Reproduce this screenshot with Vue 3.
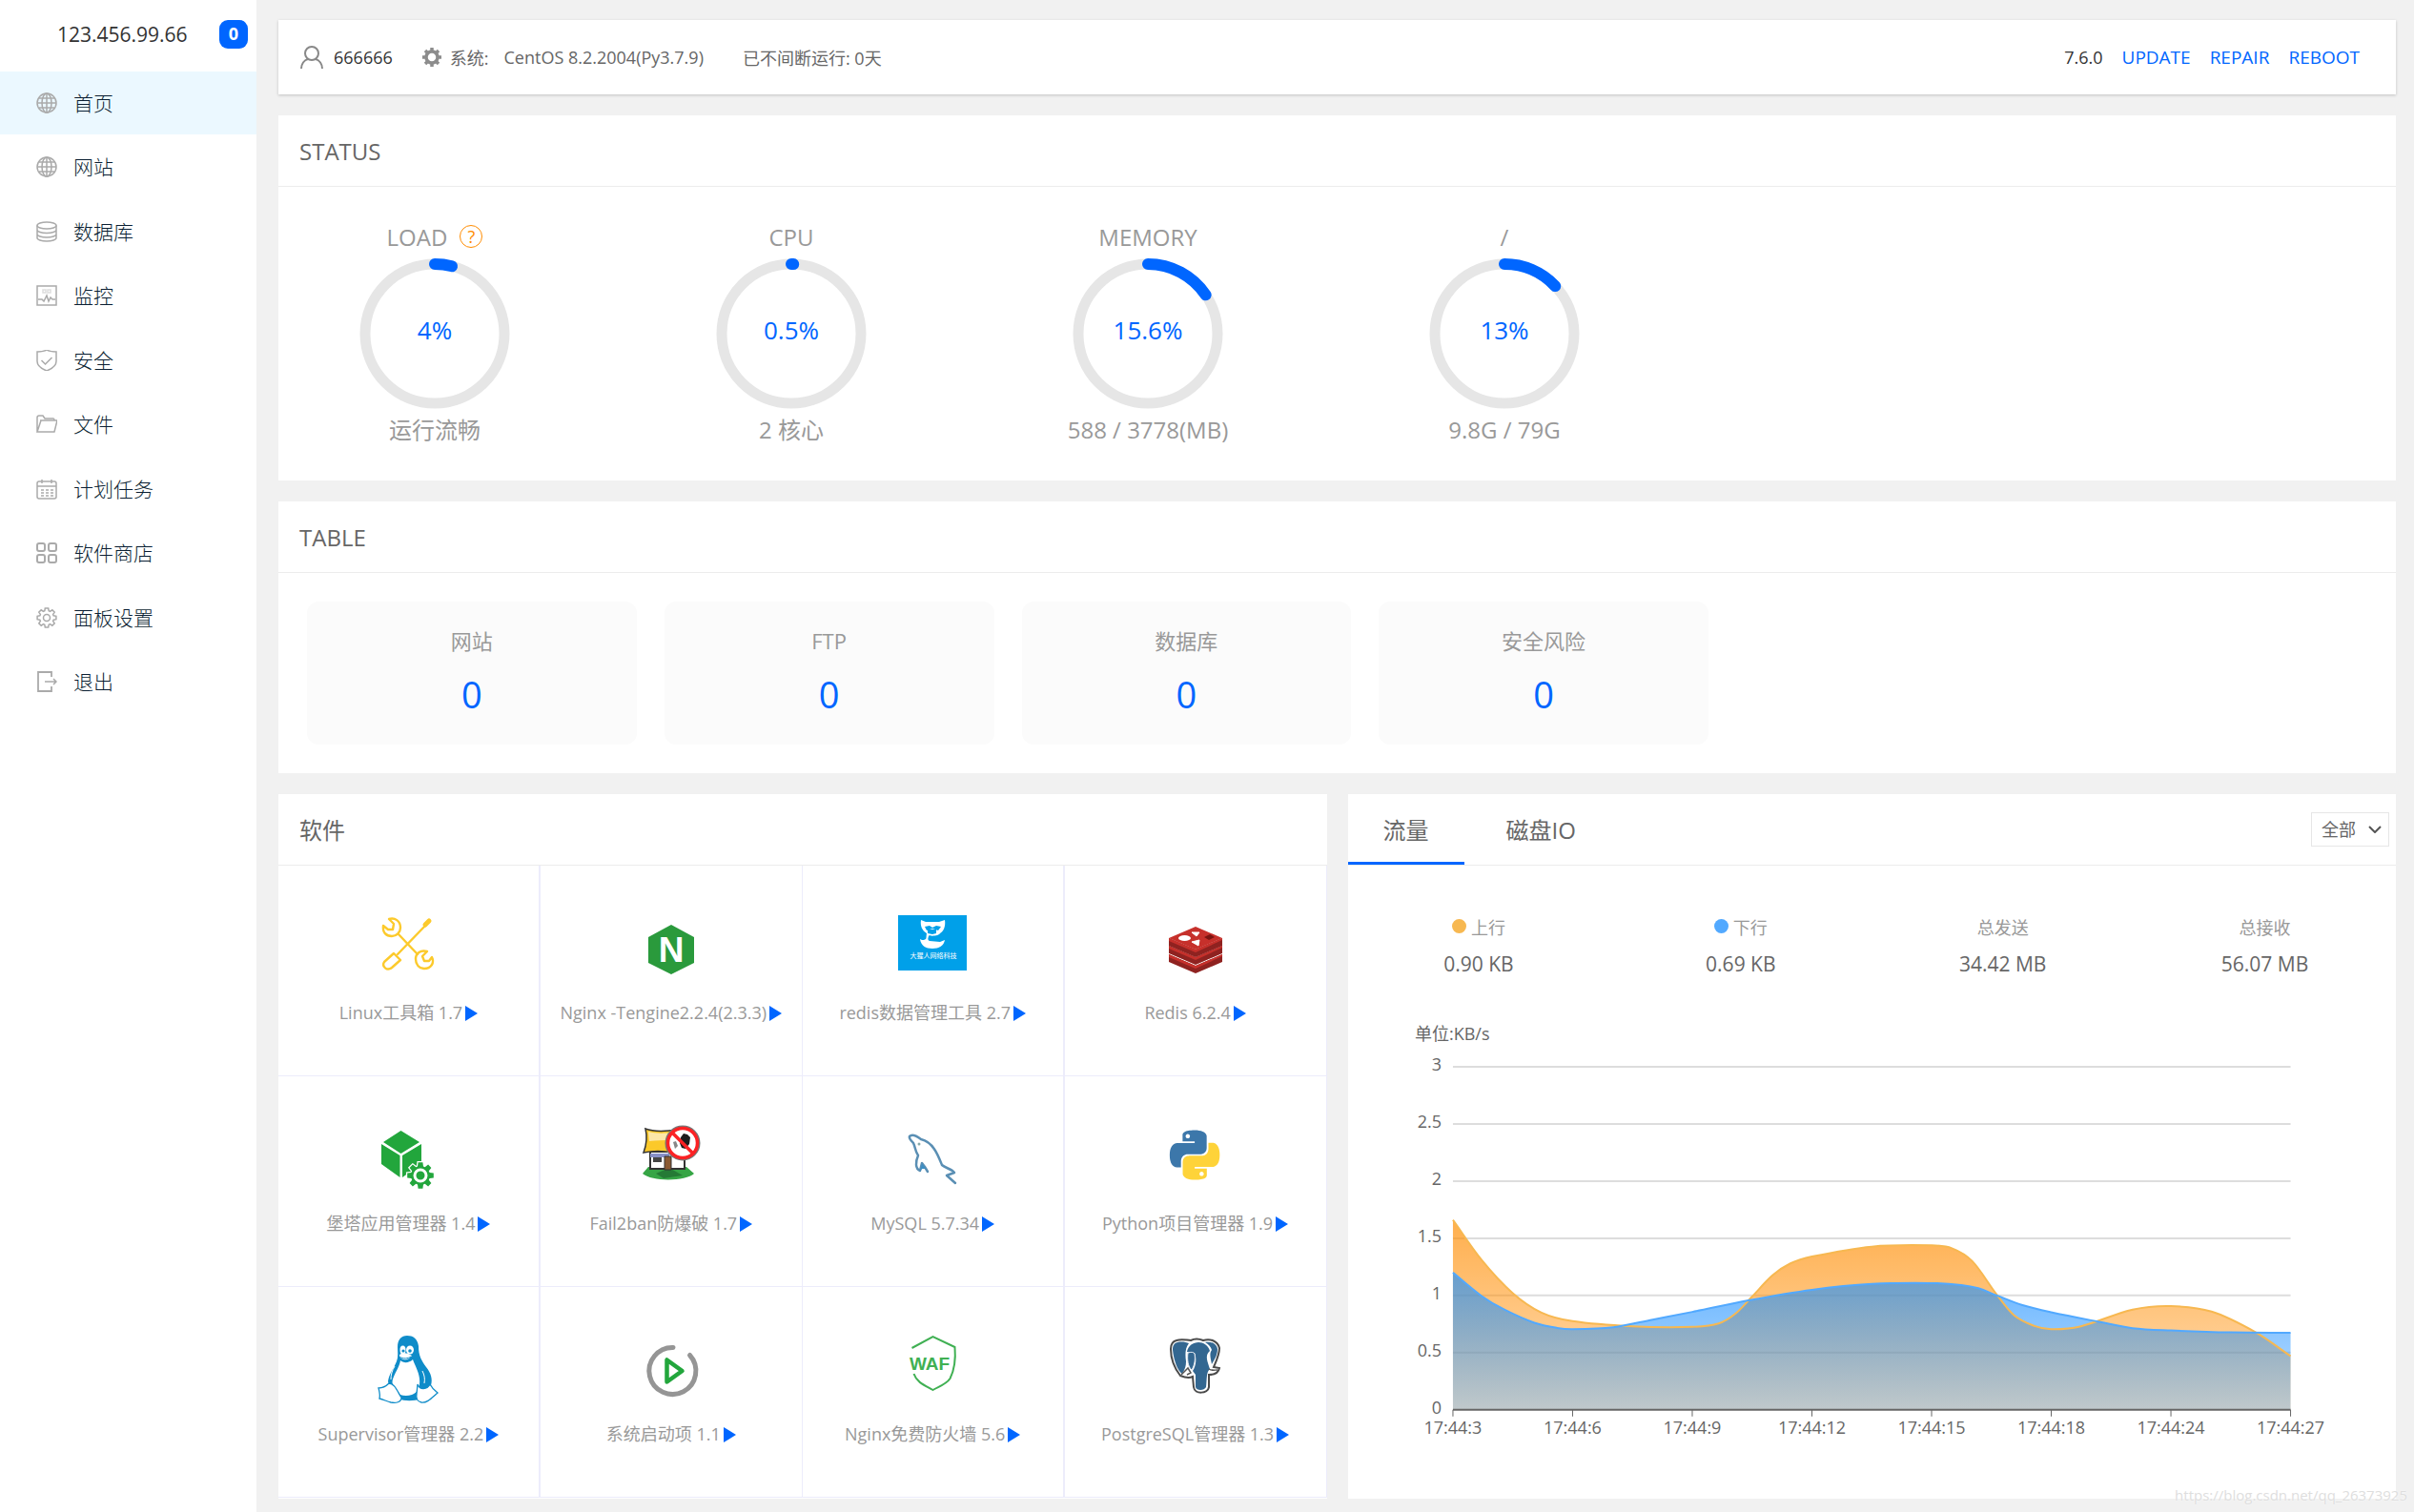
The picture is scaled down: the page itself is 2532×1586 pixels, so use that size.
<template>
  <div class="layout">
    <aside class="sidebar">
      <div class="server">
        <span class="ip">123.456.99.66</span>
        <span class="badge">0</span>
      </div>
      <nav>
        <ul class="menu">
          <li v-for="item in menus" :key="item.name">
            <a href="#" class="menu-link" :class="{ active: item.name === activeMenu }" @click.prevent="activeMenu = item.name">
              <svg class="menu-icon" viewBox="0 0 22 22" aria-hidden="true" v-html="item.icon"></svg>
              <span class="menu-name">{{ item.name }}</span>
            </a>
          </li>
        </ul>
      </nav>
    </aside>

    <main class="main">
      <header class="topbar">
        <svg class="user-icon" viewBox="0 0 24 24" aria-hidden="true">
          <circle cx="12" cy="8" r="7" />
          <path d="M1 24c0-5 3-9 7-10M23 24c0-5-3-9-7-10" />
        </svg>
        <span class="user">666666</span>
        <svg class="sys-icon" viewBox="0 0 22 22" aria-hidden="true">
          <circle cx="11" cy="11" r="6" />
          <path d="M11 1v5M11 16v5M1 11h5M16 11h5M4 4l3 3M15 15l3 3M18 4l-3 3M7 15l-3 3" />
        </svg>
        <span>系统:</span>
        <span class="os">CentOS 8.2.2004(Py3.7.9)</span>
        <span class="uptime">已不间断运行: 0天</span>
        <span class="version">7.6.0</span>
        <a href="#" class="action">UPDATE</a>
        <a href="#" class="action">REPAIR</a>
        <a href="#" class="action">REBOOT</a>
      </header>

      <section class="card">
        <h2 class="card-title">STATUS</h2>
        <div class="gauges">
          <div v-for="g in gauges" :key="g.label" class="gauge">
            <div class="gauge-label">
              {{ g.label }}
              <a v-if="g.help" href="#" class="help">?</a>
            </div>
            <svg class="ring" viewBox="0 0 160 160">
              <circle class="ring-track" cx="80" cy="80" r="73" />
              <circle
                class="ring-value"
                cx="80"
                cy="80"
                r="73"
                pathLength="100"
                :stroke-dasharray="`${g.value} 100`"
                transform="rotate(-90 80 80)"
              />
              <text x="80" y="86">{{ g.value }}%</text>
            </svg>
            <div class="gauge-desc">{{ g.desc }}</div>
          </div>
        </div>
      </section>

      <section class="card">
        <h2 class="card-title">TABLE</h2>
        <div class="counters">
          <div v-for="c in counters" :key="c.label" class="counter">
            <div class="counter-label">{{ c.label }}</div>
            <a href="#" class="counter-num">{{ c.num }}</a>
          </div>
        </div>
      </section>

      <div class="bottom">
        <section class="card">
          <h2 class="card-title">软件</h2>
          <div class="soft-list">
            <a v-for="s in softs" :key="s.name" href="#" class="soft">
              <svg class="soft-icon" viewBox="0 0 72 76" aria-hidden="true" v-html="s.icon"></svg>
              <span class="soft-name">{{ s.name }}<i class="play"></i></span>
            </a>
          </div>
        </section>

        <section class="card">
          <div class="tabs">
            <button
              v-for="t in tabs"
              :key="t"
              type="button"
              class="tab"
              :class="{ on: t === activeTab }"
              @click="activeTab = t"
            >{{ t }}</button>
            <label class="net-select">
              <select v-model="network" aria-label="网卡">
                <option value="all">全部</option>
              </select>
              <svg viewBox="0 0 14 8" aria-hidden="true"><path d="M1 1l6 6 6-6" /></svg>
            </label>
          </div>
          <div class="stats">
            <div v-for="s in stats" :key="s.label" class="stat">
              <div class="stat-label">
                <i v-if="s.color" class="dot" :style="{ background: s.color }"></i>{{ s.label }}
              </div>
              <div class="stat-value">{{ s.value }}</div>
            </div>
          </div>
          <svg class="chart" viewBox="0 0 1100 500">
            <defs>
              <linearGradient id="upFill" x1="0" y1="0" x2="0" y2="1">
                <stop offset="0" stop-color="#ff8c00" stop-opacity="0.7" />
                <stop offset="1" stop-color="#ff8c00" stop-opacity="0.28" />
              </linearGradient>
              <linearGradient id="downFill" x1="0" y1="0" x2="0" y2="1">
                <stop offset="0" stop-color="#1e90ff" stop-opacity="0.68" />
                <stop offset="1" stop-color="#1e90ff" stop-opacity="0.28" />
              </linearGradient>
            </defs>
            <text class="axis" x="70" y="32">单位:KB/s</text>
            <g v-for="n in yTicks" :key="n">
              <line v-if="n > 0" class="grid" :x1="left" :x2="right" :y1="py(n)" :y2="py(n)" />
              <text class="axis" :x="left - 12" :y="py(n) + 4" text-anchor="end">{{ n }}</text>
            </g>
            <path :d="area(up)" fill="url(#upFill)" />
            <path :d="area(down)" fill="url(#downFill)" />
            <path :d="curve(up)" class="line-up" />
            <path :d="curve(down)" class="line-down" />
            <line class="axis-line" :x1="left" :x2="right" :y1="py(0)" :y2="py(0)" />
            <g v-for="(t, i) in times" :key="t">
              <line class="tick" :x1="px(i)" :x2="px(i)" :y1="py(0)" :y2="py(0) + 7" />
              <text class="axis" :x="px(i)" :y="py(0) + 25" text-anchor="middle">{{ t }}</text>
            </g>
          </svg>
        </section>
      </div>
    </main>

    <div class="watermark">https://blog.csdn.net/qq_26373925</div>
  </div>
</template>

<script setup>
import { ref } from 'vue'

const activeMenu = ref('首页')
const activeTab = ref('流量')
const network = ref('all')

const globe = '<circle cx="11" cy="11" r="10"/><ellipse cx="11" cy="11" rx="5" ry="10"/><path d="M1 11h20M11 1v20M3 6h16M3 16h16"/>'

// 8 齿齿轮轮廓
const gear = (cx, cy, ro, ri) => {
  const pts = []
  for (let i = 0; i < 8; i++) {
    const a = (i * Math.PI) / 4
    ;[[-0.3, ri], [-0.17, ro], [0.17, ro], [0.3, ri]].forEach(([d, r]) => {
      pts.push(`${(cx + r * Math.sin(a + d)).toFixed(1)} ${(cy - r * Math.cos(a + d)).toFixed(1)}`)
    })
  }
  return 'M' + pts.join('L') + 'Z'
}

const menus = [
  { name: '首页', icon: globe },
  { name: '网站', icon: globe },
  {
    name: '数据库',
    icon: '<ellipse cx="11" cy="4.5" rx="10" ry="3.5"/><path d="M1 4.500v13c0 2 4.500 3.500 10 3.500s10-1.500 10-3.500v-13M1 9c0 2 4.500 3.500 10 3.500S21 11 21 9M1 13.500c0 2 4.500 3.500 10 3.500s10-1.500 10-3.500"/>'
  },
  {
    name: '监控',
    icon: '<path d="M1 1h20v20H1zM2 15h4l2 2 3-6 2 6 2-4 2 2h3"/><path d="M7 5h3v3H7zM12 5h3v3h-3z" opacity=".4"/>'
  },
  { name: '安全', icon: '<path d="M11 0c3 2 7 2 10 2v10c0 5-5 8-10 10C6 20 1 17 1 12V2c3 0 7 0 10-2zM5.500 11l4 4 7-7"/>' },
  { name: '文件', icon: '<path d="M1 19V4c0-1 1-2 2-2h4l2 3h9c1 0 1 1 1 2M1 19L5 7h17l-3 12H1zM4 7h15"/>' },
  {
    name: '计划任务',
    icon: '<rect x="1" y="3" width="20" height="18" rx="2"/><path d="M1 8h20M6 1v4M16 1v4"/><path d="M5 12h3M10 12h3M15 12h3M5 15h3M10 15h3M15 15h3M5 18h3M10 18h3M15 18h3"/>'
  },
  {
    name: '软件商店',
    icon: '<g stroke-width="2"><rect x="1" y="1" width="8" height="8" rx="2"/><rect x="13" y="1" width="8" height="8" rx="2"/><rect x="1" y="13" width="8" height="8" rx="2"/><rect x="13" y="13" width="8" height="8" rx="2"/></g>'
  },
  { name: '面板设置', icon: `<path d="${gear(11, 11, 10, 7.5)}"/><circle cx="11" cy="11" r="3.500"/>` },
  { name: '退出', icon: '<path d="M16 6V1H2v20h14v-5" stroke-width="1.800"/><path d="M9 11h12M18 8l3 3-3 3"/>' }
]

const gauges = [
  { label: 'LOAD', value: 4, desc: '运行流畅', help: true },
  { label: 'CPU', value: 0.5, desc: '2 核心' },
  { label: 'MEMORY', value: 15.6, desc: '588 / 3778(MB)' },
  { label: '/', value: 13, desc: '9.8G / 79G' }
]

const counters = [
  { label: '网站', num: 0 },
  { label: 'FTP', num: 0 },
  { label: '数据库', num: 0 },
  { label: '安全风险', num: 0 }
]

// redis 图标的一层
const redisLayer = (y) =>
  `<path d="M8 ${y}l28 12 28-12v8L36 ${y + 20} 8 ${y + 8}z" fill="#8f2220"/><path d="M8 ${y}l28 12 28-12v2L36 ${y + 15} 8 ${y + 3}z" fill="#c6302b"/>`

const softs = [
  {
    name: 'Linux工具箱 1.7',
    icon: `<g fill="none" stroke="#fcca2c" stroke-width="2.400" stroke-linejoin="round" stroke-linecap="round">
      <path d="M16 6c6-2 12 2 12 9 0 5-4 9-9 9-6 0-10-4-9-11l5 4 5 0 1-6z"/>
      <path d="M26 22l20 21"/>
      <path d="M61 46c3 6-1 12-8 12-6 0-9-5-9-10 0-6 5-10 12-8l-5 5 2 5 5 0z"/>
      <path d="M55 12L25 43"/><path d="M54 12l4-4" stroke-width="5"/>
      <path d="M21 42l7 7-9 8c-5 4-11-1-8-6z"/></g>`
  },
  {
    name: 'Nginx -Tengine2.2.4(2.3.3)',
    icon: `<path d="M36 12l24 13v27L36 64 12 52V25z" fill="#2a9a3c"/>
      <text x="36" y="51" text-anchor="middle" font-size="37" font-weight="700" fill="#fff" font-family="Liberation Sans, sans-serif">N</text>`
  },
  {
    name: 'redis数据管理工具 2.7',
    icon: `<path d="M0 2h72v58H0z" fill="#00a0e9"/>
      <path d="M24 7l5 2h14l6-2c1 6-1 12-5 14-1 3-14 4-14 0-5-3-7-8-6-14z" fill="#fff"/>
      <path d="M28 14l5-1 3 2 4-2 5 1-3 4-6-2-6 2z" fill="#00a0e9"/><path d="M31 17h9v4l-4 1-5-1z" fill="#00a0e9"/>
      <path d="M30 21c-1 5 1 7-5 7l-2-1c1 7 6 10 13 10s12-3 13-9l-5 2-11-1c-3-1-1-5 0-7z" fill="#fff"/>
      <text x="37" y="47" text-anchor="middle" font-size="7" fill="#fff">大猩人网络科技</text>`
  },
  {
    name: 'Redis 6.2.4',
    icon: `${redisLayer(43)}${redisLayer(34)}${redisLayer(26)}<path d="M36 14l28 12-28 12L8 26z" fill="#c6302b"/>
      <ellipse cx="24.500" cy="26" rx="6.500" ry="3" fill="#fff"/><path d="M32 20l8 0-3 4zM32 30l8-2-1 6z" fill="#fff" stroke="#fff"/>
      <path d="M45 25l6-3 5 3-6 3z" fill="#7a1411"/>`
  },
  {
    name: '堡塔应用管理器 1.4',
    icon: `<g fill="#22a63c"><path d="M28.500 7L48 19 28.500 31 10 19zM8 21l19.500 12v23L8 42zM50 21L30 33v23l20-14z"/>
      <path d="${gear(49, 54, 14, 10)}" stroke="#fff" stroke-width="2.500" paint-order="stroke"/></g>
      <circle cx="49" cy="54" r="6" fill="none" stroke="#fff" stroke-width="3"/>`
  },
  {
    name: 'Fail2ban防爆破 1.7',
    icon: `<path d="M6 52l6-7h40l8 7c-8 8-44 9-54 0z" fill="#36a545"/><path d="M20 52l14-6 14 8-20 3z" fill="#257a35"/>
      <path d="M14 29h36v18H14z" fill="#fff" stroke="#333" stroke-width="2"/><path d="M14 31h20v4H14z" fill="#8890c8"/>
      <path d="M17 35h9v5h-9z" fill="#444"/><path d="M29 34h7v14h-7z" fill="#8a5a33" stroke="#333"/>
      <path d="M9 5c8 3 20 3 33 1l-5 24c-10-2-20-2-30 0 3-8 4-17 2-25z" fill="#fbc92a" stroke="#333" stroke-width="1.500"/>
      <path d="M12 8c7 2 15 2 26 1l-3 8c-7 0-15 0-22 1z" fill="#fde7a8"/>
      <circle cx="48" cy="20" r="17" fill="#fff" stroke="#777" stroke-width="3"/>
      <path d="M46 14l3-4 4 1 3 3-1 7-4 5-4-1-2-5z" fill="#1c1c1c"/><path d="M38 19l3-1 2 5-3 3z" fill="#888"/>
      <circle cx="48" cy="20" r="15.500" fill="none" stroke="#fb2224" stroke-width="3.500"/><path d="M37 9l22 22" stroke="#fb2224" stroke-width="3.500"/>`
  },
  {
    name: 'MySQL 5.7.34',
    icon: `<g fill="none" stroke="#5a8fb4" stroke-width="2.500" stroke-linejoin="round" stroke-linecap="round">
      <path d="M31 50l-3-5-3-4-2 8c-5-2-5-9-2-16-3-4-3-9-5-13-2-3-5-4-4-7 3-3 8 0 12 3 13 3 18 17 22 27 3 3 10 4 13 8l-8 3 9 8"/></g>
      <path d="M25 41l4 6-4 0-2 3z" fill="#3d8fc4"/><circle cx="22" cy="21" r="1.500" fill="#8aa"/>`
  },
  {
    name: 'Python项目管理器 1.9',
    icon: `<g transform="translate(9 6.500) scale(2.170)"><path fill="#3c77aa" d="M14.250.180l.9.200.730.260.590.300.450.320.340.340.250.340.160.330.100.300.040.260.020.200-.010.130V8.500l-.050.630-.130.550-.210.460-.260.380-.300.310-.330.250-.350.190-.350.140-.330.100-.300.070-.260.040-.210.020H8.770l-.690.050-.590.140-.500.220-.410.270-.330.320-.270.350-.200.360-.150.370-.100.350-.070.320-.040.270-.020.210v3.060H3.170l-.210-.030-.280-.070-.320-.120-.350-.180-.360-.260-.360-.360-.350-.460-.320-.590-.280-.730-.210-.880-.140-1.050-.050-1.230.060-1.220.160-1.040.240-.870.320-.710.360-.570.400-.440.420-.330.420-.240.400-.160.360-.100.320-.050.240-.010h.160l.060.010h8.160v-.830H6.180l-.010-2.750-.020-.370.050-.340.110-.310.170-.280.250-.260.310-.230.380-.200.440-.180.510-.150.580-.120.640-.100.710-.060.770-.040.840-.020 1.270.050zm-6.300 1.980l-.230.330-.080.410.080.410.230.340.330.220.410.090.410-.090.330-.220.230-.340.080-.410-.080-.410-.230-.330-.330-.220-.410-.090-.410.090z"/>
      <path fill="#fed339" d="M21.100 6.110l.280.060.320.120.350.180.360.270.360.350.350.470.320.590.280.730.210.880.140 1.040.050 1.230-.060 1.230-.160 1.040-.240.860-.320.710-.360.570-.400.450-.420.330-.420.240-.400.160-.360.090-.320.050-.240.020-.160-.010h-8.220v.820h5.840l.010 2.760.020.360-.050.340-.110.310-.170.290-.250.250-.310.240-.380.200-.440.170-.510.150-.580.130-.640.090-.710.070-.770.040-.840.010-1.270-.040-1.070-.140-.900-.200-.730-.250-.590-.300-.450-.330-.340-.340-.250-.340-.160-.330-.100-.300-.040-.250-.020-.200.010-.130v-5.340l.050-.640.130-.540.210-.460.260-.380.300-.320.330-.240.350-.200.350-.140.330-.100.300-.060.260-.040.210-.020.130-.010h5.840l.690-.050.590-.140.500-.210.410-.280.330-.320.270-.350.200-.360.150-.360.100-.350.070-.320.040-.280.020-.210V6.070h2.090l.140.010zm-6.470 14.250l-.230.330-.080.410.080.410.230.330.330.230.410.080.410-.080.330-.230.230-.330.080-.410-.080-.410-.230-.330-.330-.230-.410-.080-.410.080z"/></g>`
  },
  {
    name: 'Supervisor管理器 2.2',
    icon: `<path d="M25 13c0-8 4-12 10-12s11 3 12 11c0 10 3 15 8 22 5 6 7 13 5 19-3 6-7 10-10 14-8 3-18 3-24 0-3-5-10-12-11-18 1-8 6-13 9-21 2-5 1-10 1-15z" fill="#0f8cc9"/>
      <path d="M28 27c3 3 9 3 13-1 2 6 6 12 7 20 1 9-2 15-8 17-6 2-13 1-17-3-3-6-5-10-2-16 3-7 6-11 7-17z" fill="#fff"/>
      <ellipse cx="30.500" cy="16" rx="3" ry="4.500" fill="#fff"/><ellipse cx="38" cy="16" rx="4" ry="4.500" fill="#fff"/>
      <circle cx="31" cy="17" r="1.600" fill="#0f8cc9"/><circle cx="38" cy="17" r="1.800" fill="#0f8cc9"/>
      <path d="M27 21c4-3 9-2 13 1-4 5-9 6-13 1z" fill="#fff"/><path d="M27 23c4 3 9 2 12 0" fill="none" stroke="#0f8cc9"/>
      <path d="M16 51c6 0 9 9 13 15 0 5-6 6-11 5-4-1-8-3-12-4 1-4 0-7-1-11 4 0 7-1 11-5zM46 52c2 6 10 6 13 0 2 4 4 6 8 9-6 5-11 11-17 10-4-1-6-4-5-9z" fill="#fff" stroke="#0f8cc9" stroke-width="1.300"/>
      <path d="M22 33c-3 5-4 9-4 14M51 38c2 4 3 8 2 13" fill="none" stroke="#fff"/>`
  },
  {
    name: '系统启动项 1.1',
    icon: `<path d="M38 13.500A24.500 24.500 0 1 0 55.500 21.500" fill="none" stroke="#959595" stroke-width="5" stroke-linecap="round"/>
      <path d="M31.500 26.500v23L47.500 38z" fill="none" stroke="#22a63c" stroke-width="4.500" stroke-linejoin="round"/>`
  },
  {
    name: 'Nginx免费防火墙 5.6',
    icon: `<path d="M14.500 14L36.500 2l23 11c1 12 0 23-5 33-4 6-11 8-18 12-9-5-17-8-20-17" fill="none" stroke="#40b053" stroke-width="2"/>
      <text x="33" y="37" text-anchor="middle" font-size="19" font-weight="700" fill="#40b053" font-family="Liberation Sans, sans-serif">WAF</text>`
  },
  {
    name: 'PostgreSQL管理器 1.3',
    icon: `<path d="M16 6c6-2 11 0 15 0 4-2 8-2 13 0 7-2 15 0 17 8 0 7-3 13-6 20l6 1c-1 5-5 7-11 7v13c-1 7-15 8-16 0l-1-11c-4 2-8 1-13-1C13 34 10 25 10 15c0-5 2-8 6-9z" fill="#fff" stroke="#4a4a4a" stroke-width="2"/>
      <path d="M17 8c5-1 9 0 12 1-4 5-4 12-3 19 0 5-1 8-4 13-5-3-9-15-10-25 0-4 1-7 5-8zM46 8c6-1 12 1 13 7 0 6-3 11-6 16-1-6-3-11 0-15-1-3-3-6-7-8z" fill="#336791"/>
      <path d="M27 18c2-12 20-14 24-1-6 5-2 12 0 19-4 3-3 12-4 19-2 4-10 4-11 0V42l-3-4c4-6 4-14 2-19z" fill="#336791"/>
      <path d="M28 19c3-1 6-1 7 1 1 6 0 12-3 17-4-3-5-11-4-18z" fill="#336791" stroke="#e4eaf2"/>
      <path d="M21 42l7-7 3 5-4 2M50 36c3 2 6 1 9 1" fill="none" stroke="#555" stroke-width="1.500"/>`
  }
]

const tabs = ['流量', '磁盘IO']

const stats = [
  { label: '上行', value: '0.90 KB', color: '#f7b851' },
  { label: '下行', value: '0.69 KB', color: '#52a9ff' },
  { label: '总发送', value: '34.42 MB' },
  { label: '总接收', value: '56.07 MB' }
]

// 流量图
const left = 110
const right = 989
const times = ['17:44:3', '17:44:6', '17:44:9', '17:44:12', '17:44:15', '17:44:18', '17:44:24', '17:44:27']
const yTicks = [0, 0.5, 1, 1.5, 2, 2.5, 3]

const up = [
  [0, 1.66], [0.24, 1.31], [0.5, 1.02], [0.74, 0.85], [1, 0.775], [1.5, 0.73], [2, 0.725],
  [2.22, 0.755], [2.36, 0.84], [2.5, 0.99], [2.67, 1.175], [2.82, 1.28], [3, 1.34], [3.5, 1.427],
  [4, 1.438], [4.17, 1.413], [4.34, 1.3], [4.545, 1.007], [4.69, 0.826], [4.86, 0.733], [5, 0.705],
  [5.24, 0.728], [5.68, 0.876], [6, 0.907], [6.34, 0.859], [6.71, 0.677], [7, 0.47]
]
const down = [
  [0, 1.2], [0.24, 0.995], [0.43, 0.876], [0.68, 0.761], [0.87, 0.716], [1, 0.705], [1.34, 0.722],
  [1.67, 0.789], [2, 0.856], [2.47, 0.957], [3, 1.049], [3.5, 1.1], [4, 1.108], [4.25, 1.091],
  [4.39, 1.063], [4.545, 1], [4.76, 0.915], [5, 0.853], [5.41, 0.767], [5.68, 0.714], [6, 0.694],
  [6.5, 0.677], [7, 0.674]
]

const px = (i) => left + (i * (right - left)) / (times.length - 1)
const py = (v) => 420 - v * 120

function curve(data) {
  const p = data.map(([x, v]) => [px(x), py(v)])
  // 各点斜率取相邻两点连线
  const m = p.map((_, i) => {
    const a = p[Math.max(i - 1, 0)]
    const b = p[Math.min(i + 1, p.length - 1)]
    return (b[1] - a[1]) / (b[0] - a[0])
  })
  let d = `M${p[0][0]} ${p[0][1]}`
  for (let i = 1; i < p.length; i++) {
    const h = (p[i][0] - p[i - 1][0]) / 3
    d += `C${p[i - 1][0] + h} ${p[i - 1][1] + m[i - 1] * h} ${p[i][0] - h} ${p[i][1] - m[i] * h} ${p[i][0]} ${p[i][1]}`
  }
  return d
}

const area = (data) => `${curve(data)}V${py(0)}H${left}Z`
</script>

<style>
body {
  background: #f1f1f1;
}
</style>

<style scoped>
.layout {
  position: relative;
  display: flex;
  min-height: 100vh;
  font-family: "Open Sans", "Noto Sans CJK SC", sans-serif;
  font-size: 18px;
  color: #666;
  background: #f1f1f1;
}

.layout *,
.layout {
  box-sizing: border-box;
}

a {
  text-decoration: none;
  color: inherit;
}

.sidebar {
  width: 269px;
  flex-shrink: 0;
  background: #fff;
}

.server {
  display: flex;
  align-items: center;
  justify-content: space-between;
  height: 75px;
  padding: 0 9px 3px 60px;
  color: #333;
}

.ip {
  font-size: 21px;
}

.badge {
  width: 30px;
  height: 30px;
  border-radius: 9px;
  background: #06f;
  color: #fff;
  font-weight: 700;
  line-height: 29px;
  text-align: center;
}

.menu {
  display: flex;
  flex-direction: column;
  justify-content: space-between;
  height: 673px;
  margin: 0;
  padding: 0;
  list-style: none;
}

.menu-link {
  display: flex;
  align-items: center;
  gap: 17px;
  height: 66px;
  padding-left: 38px;
  font-size: 21px;
  font-weight: 300;
  color: #0b1f33;
}

.menu-link.active {
  background: #ebf8ff;
}

.menu-icon {
  width: 22px;
  height: 22px;
  fill: none;
  stroke: #aaa;
  stroke-width: 1.5;
}

.menu-name {
  padding-bottom: 2px;
}

.main {
  flex: 1;
  min-width: 0;
  display: flex;
  flex-direction: column;
  gap: 22px;
  padding: 21px 19px 14px 23px;
}

.topbar {
  display: flex;
  align-items: center;
  height: 78px;
  padding: 0 38px 0 23px;
  background: #fff;
  box-shadow: 0 1px 3px rgba(0, 0, 0, 0.2);
  white-space: nowrap;
}

.user-icon {
  width: 24px;
  height: 24px;
  margin-right: 11px;
  fill: none;
  stroke: #888;
  stroke-width: 2;
}

.user {
  margin-right: 30px;
  color: #333;
}

.sys-icon {
  width: 22px;
  height: 22px;
  margin-right: 8px;
  fill: none;
  stroke: #8c8c8c;
  stroke-width: 3.5;
}

.os {
  margin-left: 16px;
}

.uptime {
  margin-left: 41px;
}

.version {
  margin-left: auto;
  color: #333;
}

.action {
  margin-left: 20px;
  font-size: 19px;
  color: #06f;
}

.card {
  background: #fff;
  min-width: 0;
}

.card-title {
  height: 75px;
  margin: 0;
  padding-left: 22px;
  border-bottom: 1px solid #ececec;
  font-size: 24px;
  font-weight: 400;
  line-height: 75px;
}

.gauges {
  display: grid;
  grid-template-columns: repeat(4, 328px);
  column-gap: 46px;
  padding: 34px 0 35px;
  font-size: 24px;
  color: #999;
}

.gauge {
  display: flex;
  flex-direction: column;
  align-items: center;
}

.gauge-label {
  display: flex;
  align-items: center;
  gap: 13px;
  height: 36px;
}

.help {
  width: 24px;
  height: 24px;
  border: 1px solid #ff8c00;
  border-radius: 50%;
  color: #ff8c00;
  font-size: 18px;
  line-height: 22px;
  text-align: center;
}

.ring {
  width: 160px;
  height: 160px;
  margin: 4px 0 3px;
}

.ring circle {
  fill: none;
}

.ring-track {
  stroke: #e6e6e6;
  stroke-width: 11;
}

.ring-value {
  stroke: #06f;
  stroke-width: 12;
  stroke-linecap: round;
}

.ring text {
  font-size: 26px;
  fill: #06f;
  text-anchor: middle;
}

.gauge-desc {
  height: 36px;
  line-height: 36px;
}

.counters {
  display: grid;
  grid-template-columns: repeat(4, 16%);
  gap: 29px;
  padding: 30px;
}

.counter {
  height: 150px;
  padding-top: 26px;
  border-radius: 12px;
  background: #fbfbfb;
  text-align: center;
}

.counter-label {
  margin-bottom: 21px;
  font-size: 22px;
  line-height: 30px;
  color: #999;
}

.counter-num {
  display: block;
  font-size: 38px;
  line-height: 40px;
  color: #06f;
}

.bottom {
  display: grid;
  grid-template-columns: 1fr 1fr;
  gap: 22px;
  flex: 1;
}

.soft-list {
  display: grid;
  grid-template-columns: repeat(4, 1fr);
  grid-auto-rows: 221px;
}

.soft {
  display: flex;
  flex-direction: column;
  align-items: center;
  padding-top: 50px;
  border-right: 1px solid #ececfb;
  border-bottom: 1px solid #ececfb;
  color: #999;
}

.soft:nth-child(odd) {
  border-right-width: 2px;
}

.soft-icon {
  width: 72px;
  height: 76px;
  margin-bottom: 15px;
}

.soft-name {
  display: flex;
  align-items: center;
  gap: 3px;
  line-height: 27px;
  white-space: nowrap;
}

.play {
  border: 8px solid transparent;
  border-left: 13px solid #06f;
  border-right: 0;
}

.tabs {
  display: flex;
  align-items: center;
  height: 75px;
  border-bottom: 1px solid #ececec;
}

.tab {
  height: 74px;
  padding: 2px 37px 0;
  border: 0;
  border-bottom: 3px solid transparent;
  background: none;
  font: inherit;
  font-size: 24px;
  color: inherit;
}

.tab + .tab {
  margin-left: 7px;
}

.tab.on {
  border-bottom-color: #06f;
}

.net-select {
  display: flex;
  align-items: center;
  width: 82px;
  height: 36px;
  margin: 0 7px 0 auto;
  padding-right: 7px;
  border: 1px solid #e6e6e6;
}

.net-select select {
  flex: 1;
  min-width: 0;
  padding: 0 0 0 10px;
  border: 0;
  appearance: none;
  background: none;
  font: inherit;
  color: inherit;
}

.net-select svg {
  width: 14px;
  height: 8px;
  fill: none;
  stroke: #555;
  stroke-width: 2;
}

.stats {
  display: grid;
  grid-template-columns: repeat(4, 1fr);
  padding-top: 50px;
  text-align: center;
}

.stat-label {
  display: flex;
  align-items: center;
  justify-content: center;
  gap: 5px;
  height: 27px;
  margin-bottom: 11px;
  color: #999;
}

.dot {
  width: 15px;
  height: 15px;
  border-radius: 50%;
}

.stat-value {
  font-size: 21px;
  line-height: 30px;
}

.chart {
  display: block;
  width: 100%;
  margin-top: 33px;
}

.axis {
  font-size: 18px;
  fill: #666;
}

.grid {
  stroke: #ddd;
  stroke-width: 2;
}

.axis-line,
.tick {
  stroke: #666;
  stroke-width: 2;
}

.tick {
  stroke-width: 1;
}

.line-up,
.line-down {
  fill: none;
  stroke: #f7b851;
  stroke-width: 2;
}

.line-down {
  stroke: #52a9ff;
}

.watermark {
  position: absolute;
  right: 7px;
  bottom: 8px;
  font-size: 15px;
  color: #dedede;
  text-shadow: 0 0 2px #fff;
}
</style>
